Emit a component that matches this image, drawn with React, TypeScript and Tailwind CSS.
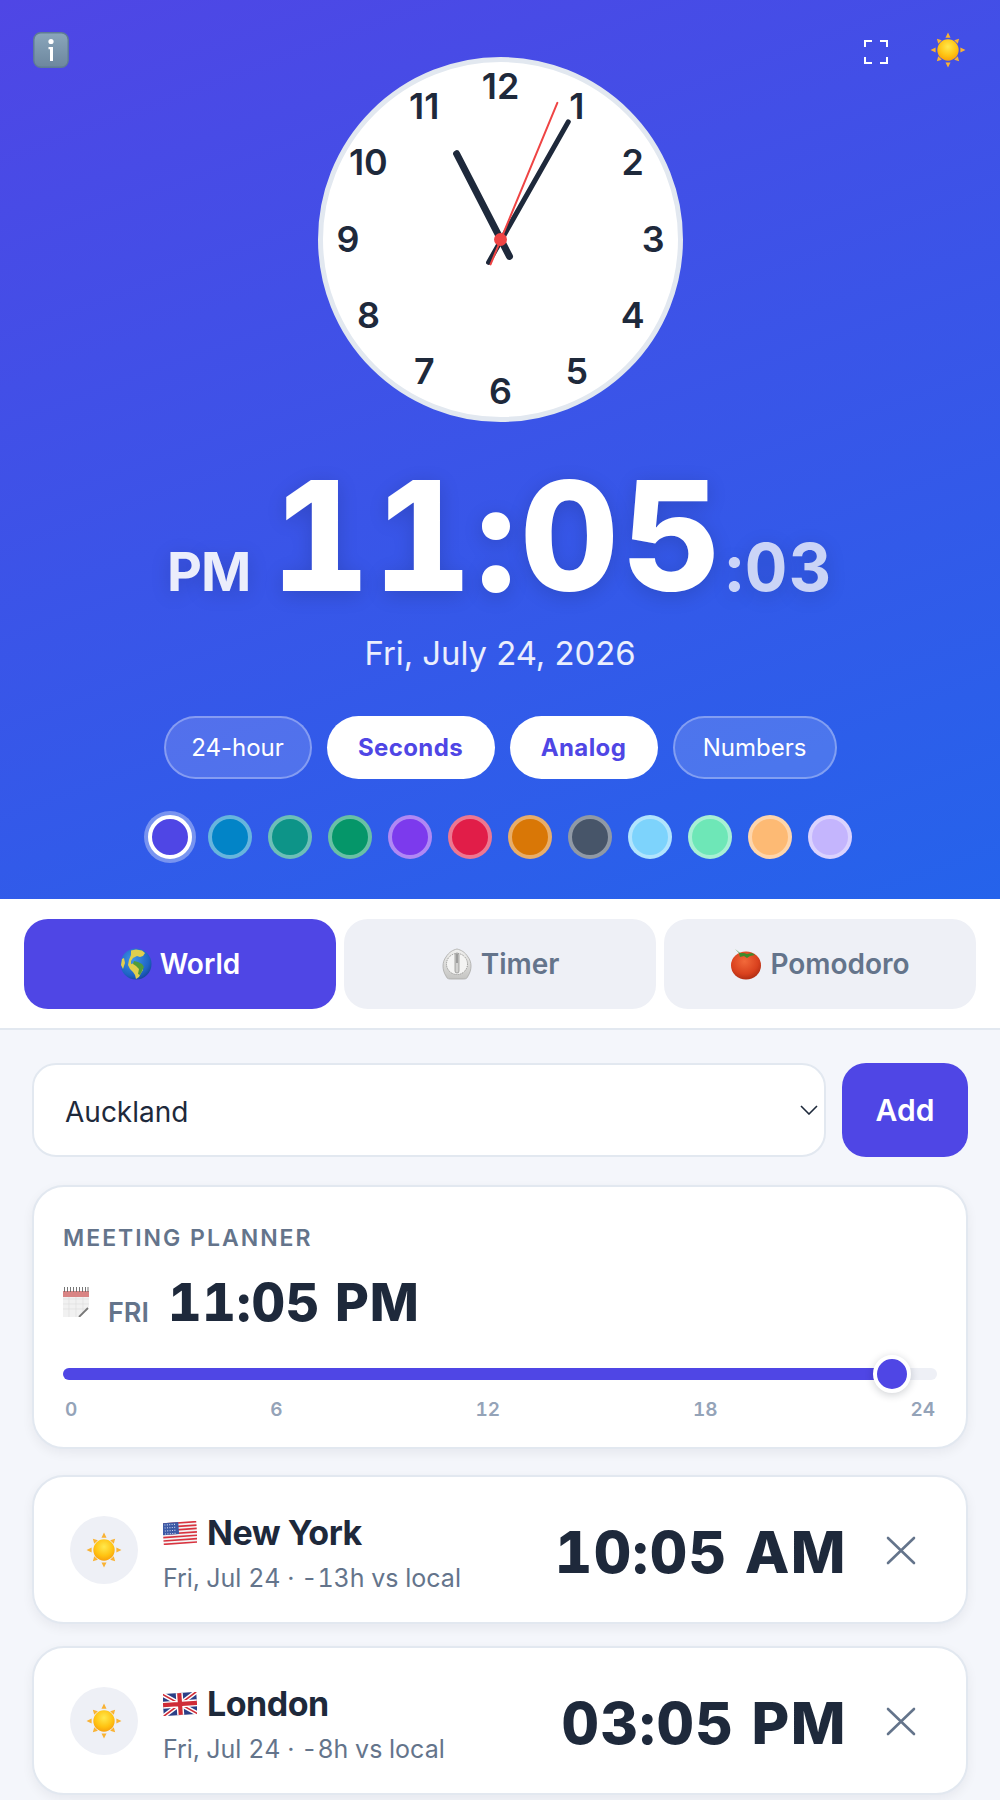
import React from "react";

function Sun({ className }: { className: string }) {
  const rays = [0, 45, 90, 135, 180, 225, 270, 315];
  return (
    <svg viewBox="0 0 64 64" className={className}>
      <defs>
        <radialGradient id="sunG" cx="50%" cy="35%" r="70%">
          <stop offset="0%" stopColor="#ffe94d" />
          <stop offset="60%" stopColor="#ffc312" />
          <stop offset="100%" stopColor="#f79a0c" />
        </radialGradient>
      </defs>
      {rays.map((r) => (
        <polygon key={r} points={r % 90 === 0 ? "32,1 36.5,10 27.5,10" : "32,4 36.5,12 27.5,12"} fill="#f9b233" transform={`rotate(${r} 32 32)`} />
      ))}
      <circle cx="32" cy="32" r="19" fill="url(#sunG)" />
    </svg>
  );
}

function InfoEmoji() {
  return (
    <svg viewBox="0 0 36 36" className="w-[36px] h-[36px]">
      <defs>
        <linearGradient id="infoG" x1="0" y1="0" x2="0" y2="1">
          <stop offset="0%" stopColor="#8aa6bb" />
          <stop offset="100%" stopColor="#6d879e" />
        </linearGradient>
      </defs>
      <rect x="0.8" y="0.8" width="34.4" height="34.4" rx="7" fill="url(#infoG)" stroke="#5f7c94" strokeWidth="1.4" />
      <circle cx="18" cy="9.5" r="2.6" fill="#fff" />
      <path d="M15.5 15h4.5v14h-3V17.2h-1.5z" fill="#fff" />
    </svg>
  );
}

function Globe() {
  return (
    <svg viewBox="0 0 32 32" className="w-[32px] h-[32px]">
      <defs>
        <radialGradient id="globeG" cx="40%" cy="35%" r="75%">
          <stop offset="0%" stopColor="#3f95e8" />
          <stop offset="70%" stopColor="#1e63c4" />
          <stop offset="100%" stopColor="#123d8c" />
        </radialGradient>
      </defs>
      <circle cx="16" cy="16" r="15.5" fill="url(#globeG)" />
      <path d="M11 2.5l5-1 6 1 3 2.5-2 3-3 1-3-1-4 2-2 3 0 3 4-1 4 1 3 2 1 4-2 3-2 4-3 2-1-4-2-3-3-3-2-4 1-5 2-5z" fill="#e0cf4e" />
      <path d="M14 13l4 1 4 2 2 3-2 4-2 4-2-1 1-5-3-3-3-2z" fill="#4f9c3b" />
      <path d="M2 11l2-1 1 5-2 6-2-4z" fill="#e3cf4f" />
    </svg>
  );
}

function TimerEmoji() {
  return (
    <svg viewBox="0 0 32 32" className="w-[32px] h-[32px]">
      <defs>
        <linearGradient id="timerG" x1="0" y1="0" x2="0" y2="1">
          <stop offset="0%" stopColor="#f1f1f0" />
          <stop offset="100%" stopColor="#c5c5c3" />
        </linearGradient>
      </defs>
      <path d="M5 28 C1 22 1 14 5 9 C8 4 12 2 16 1 C20 2 24 4 27 9 C31 14 31 22 27 28 C26 31 24 31 22 31 H10 C8 31 6 31 5 28z" fill="url(#timerG)" stroke="#a9a9a7" strokeWidth="0.8" />
      <circle cx="16" cy="16" r="10.5" fill="#f4f4f3" stroke="#8f8f8d" strokeWidth="1" strokeDasharray="1 1" />
      <rect x="14" y="5" width="4" height="20" rx="2" fill="#d2d2d0" stroke="#8a8a88" strokeWidth="0.7" />
      <path d="M16 6v9" stroke="#666" strokeWidth="1" />
    </svg>
  );
}

function Tomato() {
  return (
    <svg viewBox="0 0 32 32" className="w-[32px] h-[32px]">
      <defs>
        <radialGradient id="tomG" cx="45%" cy="35%" r="70%">
          <stop offset="0%" stopColor="#f2693a" />
          <stop offset="65%" stopColor="#d9411e" />
          <stop offset="100%" stopColor="#a82a12" />
        </radialGradient>
      </defs>
      <ellipse cx="16" cy="17.5" rx="15" ry="14" fill="url(#tomG)" />
      <path d="M5 1l5 4 4 0 3 1 5-1 3 2-5 1-3 2-3-2-4 1-1-4z" fill="#3f8a2a" />
    </svg>
  );
}

function CalendarEmoji() {
  return (
    <svg viewBox="0 0 26 30" className="w-[26px] h-[30px]">
      <rect x="0" y="4" width="26" height="26" fill="#f1f1f1" />
      <path d="M0 12h26M0 17h26M0 22h26M6 8v22M13 8v22M20 8v22" stroke="#dcdcdc" strokeWidth="0.6" />
      <rect x="0" y="4" width="26" height="6" fill="#d98484" />
      <path d="M1.5 0v5M4.5 0v5M7.5 0v5M10.5 0v5M13.5 0v5M16.5 0v5M19.5 0v5M22.5 0v5M25 0v5" stroke="#666" strokeWidth="0.9" />
      <path d="M26 20 L17 30 H26z" fill="#fff" />
      <path d="M16 30 L25 21" stroke="#777" strokeWidth="1.8" />
    </svg>
  );
}

function FlagUS() {
  return (
    <svg viewBox="0 0 34 24" className="w-[34px] h-[24px]">
      <g transform="rotate(-4 17 12)">
        <rect y="1" width="34" height="22" rx="1.5" fill="#f4f4f4" />
        {[0, 2, 4, 6, 8, 10].map((i) => (
          <rect key={i} y={1 + i * 1.7} width="34" height="1.7" fill="#d8333f" />
        ))}
        <rect y="21.4" width="34" height="1.6" fill="#d8333f" />
        <rect y="1" width="16" height="12" fill="#3c5aa6" />
        <path d="M2 3h12M2 6h12M2 9h12M2 12h12" stroke="#cfd6ee" strokeWidth="1.1" strokeDasharray="1 1.4" />
      </g>
    </svg>
  );
}

function FlagUK() {
  return (
    <svg viewBox="0 0 34 24" className="w-[34px] h-[24px]">
      <g transform="rotate(-4 17 12)">
        <rect y="1" width="34" height="22" rx="1.5" fill="#2b3f87" />
        <path d="M0 1L34 23M34 1L0 23" stroke="#fff" strokeWidth="4.5" />
        <path d="M0 1L34 23M34 1L0 23" stroke="#cf2b36" strokeWidth="1.6" />
        <path d="M17 1v22M0 12h34" stroke="#fff" strokeWidth="7" />
        <path d="M17 1v22M0 12h34" stroke="#cf2b36" strokeWidth="4.2" />
      </g>
    </svg>
  );
}

function Fullscreen() {
  return (
    <svg viewBox="0 0 24 24" className="w-[24px] h-[24px]" fill="none" stroke="#fff" strokeWidth="2">
      <path d="M1 7V1h7M16 1h7v6M23 17v6h-7M8 23H1v-6" />
    </svg>
  );
}

function Clock() {
  const nums = [12, 1, 2, 3, 4, 5, 6, 7, 8, 9, 10, 11];
  return (
    <div className="w-[365px] h-[365px] shrink-0 rounded-full bg-white border-[5px] border-[#e2e8f0] box-border">
      <svg viewBox="-178 -178 356 356" className="w-[355px] h-[355px] block">
        {nums.map((n, i) => {
          const a = (i * 30 * Math.PI) / 180;
          return (
            <text key={n} x={153 * Math.sin(a)} y={-153 * Math.cos(a) - 1} textAnchor="middle" dominantBaseline="central" fontSize="36" fontWeight="600" fill="#1e293b" fontFamily="Inter">
              {n}
            </text>
          );
        })}
        <line x1="9" y1="17" x2="-44" y2="-86" stroke="#1e293b" strokeWidth="7" strokeLinecap="round" />
        <line x1="-12" y1="23" x2="68" y2="-118" stroke="#1e293b" strokeWidth="5" strokeLinecap="round" />
        <line x1="-10" y1="25" x2="57" y2="-137" stroke="#ef4444" strokeWidth="2" strokeLinecap="round" />
        <circle r="6.5" fill="#ef4444" />
      </svg>
    </div>
  );
}

const swatches = [
  { c: "bg-[#4f46e5]", b: "border-white" },
  { c: "bg-[#0284c7]", b: "border-white/40" },
  { c: "bg-[#0d9488]", b: "border-white/40" },
  { c: "bg-[#059669]", b: "border-white/40" },
  { c: "bg-[#7c3aed]", b: "border-white/40" },
  { c: "bg-[#e11d48]", b: "border-white/40" },
  { c: "bg-[#d97706]", b: "border-white/40" },
  { c: "bg-[#475569]", b: "border-white/40" },
  { c: "bg-[#7dd3fc]", b: "border-white/40" },
  { c: "bg-[#6ee7b7]", b: "border-white/40" },
  { c: "bg-[#fdba74]", b: "border-white/40" },
  { c: "bg-[#c4b5fd]", b: "border-white/40" },
];

function Pill({ label, on, w }: { label: string; on?: boolean; w: string }) {
  return (
    <div className={`${w} h-[63px] rounded-full flex items-center justify-center text-[24px] ${on ? "bg-white text-[#4f46e5] font-bold tracking-[0.4px]" : "bg-white/15 border-2 border-white/30 text-white font-normal"}`}>
      {label}
    </div>
  );
}

function Tab({ icon, label, on }: { icon: React.ReactNode; label: string; on?: boolean }) {
  return (
    <div className={`flex-1 h-[90px] rounded-[24px] flex items-center justify-center gap-[8px] text-[28px] font-semibold ${on ? "bg-[#4f46e5] text-white" : "bg-[#eef0f6] text-[#64748b]"}`}>
      {icon}
      <span>{label}</span>
    </div>
  );
}

function CityCard({ flag, name, sub, time }: { flag: React.ReactNode; name: string; sub: string; time: string }) {
  return (
    <div className="h-[149px] rounded-[32px] bg-white border-2 border-[#e2e8f0] shadow-[0_4px_12px_rgba(15,23,42,0.06)] flex items-center pl-[36px] pr-[50px]">
      <div className="w-[68px] h-[68px] rounded-full bg-[#eef0f6] flex items-center justify-center shrink-0">
        <Sun className="w-[36px] h-[36px]" />
      </div>
      <div className="ml-[25px] flex-1">
        <div className="flex items-center gap-[10px] text-[34px] leading-[44px] font-bold text-[#1e293b] tracking-[-0.5px] mt-[6px]">
          {flag}
          <span>{name}</span>
        </div>
        <div className="mt-[6px] text-[25px] leading-[34px] text-[#64748b] tabular-nums [font-feature-settings:'tnum'_1,'calt'_0]">{sub}</div>
      </div>
      <div className="mt-[4px] text-[58px] font-extrabold text-[#1e293b] tabular-nums leading-none tracking-[1.5px] [font-feature-settings:'tnum'_1,'calt'_0]">{time}</div>
      <svg viewBox="0 0 30 30" className="w-[30px] h-[30px] ml-[39px] shrink-0" fill="none" stroke="#64748b" strokeWidth="2.6" strokeLinecap="round">
        <path d="M2 3l26 25M28 3L2 28" />
      </svg>
    </div>
  );
}

export default function App() {
  return (
    <div className="w-[1000px] h-[1800px] overflow-hidden bg-[#f4f6fb] font-['Inter',sans-serif] [font-optical-sizing:none] [font-variation-settings:'opsz'_14]">
      <div className="relative h-[899px] bg-[linear-gradient(160deg,#4f46e5,#2563eb)] flex flex-col items-center pt-[57px] text-white">
        <div className="absolute left-[33px] top-[32px]"><InfoEmoji /></div>
        <div className="absolute left-[864px] top-[40px]"><Fullscreen /></div>
        <div className="absolute left-[930px] top-[32px]"><Sun className="w-[36px] h-[36px]" /></div>
        <Clock />
        <div className="mt-[38px] flex items-baseline h-[152px] leading-none [text-shadow:0_4px_20px_rgba(0,0,0,0.15)] [font-feature-settings:'tnum'_1,'calt'_0]">
          <span className="text-[54px] font-bold text-white/90 mr-[21px] tracking-[-1px]">PM</span>
          <span className="text-[152px] leading-[152px] font-extrabold tabular-nums tracking-[4px]">11:05</span>
          <span className="text-[66px] font-bold text-white/75 tabular-nums ml-[1px] tracking-[1.5px]">:03</span>
        </div>
        <div className="mt-[19px] text-[32.8px] leading-[44px] text-white/90">Fri, July 24, 2026</div>
        <div className="mt-[41px] flex gap-[15px]">
          <Pill label="24-hour" w="w-[148px]" />
          <Pill label="Seconds" on w="w-[168px]" />
          <Pill label="Analog" on w="w-[148px]" />
          <Pill label="Numbers" w="w-[164px]" />
        </div>
        <div className="mt-[36px] flex gap-[16px] items-center">
          {swatches.map((s, i) => (
            <div key={i} className={`w-[44px] h-[44px] rounded-full border-[4px] ${s.b} ${s.c} ${i === 0 ? "shadow-[0_0_0_4px_rgba(255,255,255,0.35)]" : ""}`} />
          ))}
        </div>
      </div>

      <div className="h-[131px] bg-white border-b-2 border-[#e2e8f0] px-[24px] pt-[20px] flex gap-[8px] items-start">
        <Tab icon={<Globe />} label="World" on />
        <Tab icon={<TimerEmoji />} label="Timer" />
        <Tab icon={<Tomato />} label="Pomodoro" />
      </div>

      <div className="px-[32px] pt-[33px]">
        <div className="flex gap-[16px] h-[94px]">
          <div className="relative flex-1 min-w-0">
            <select className="appearance-none w-full h-[94px] rounded-[24px] bg-white border-2 border-[#e2e8f0] pl-[31px] pr-[30px] pt-[3px] text-[28px] text-[#1e293b]" defaultValue="Auckland">
              <option>Auckland</option>
            </select>
            <svg viewBox="0 0 18 10" className="absolute right-[8px] top-[42px] w-[18px] h-[10px]" fill="none" stroke="#1e293b" strokeWidth="1.6">
              <path d="M1 1l8 8 8-8" />
            </svg>
          </div>
          <div className="w-[126px] rounded-[24px] bg-[#4f46e5] text-white text-[30px] font-semibold flex items-center justify-center">Add</div>
        </div>

        <div className="mt-[28px] h-[264px] rounded-[32px] bg-white border-2 border-[#e2e8f0] shadow-[0_4px_12px_rgba(15,23,42,0.06)] px-[29px] pt-[37px]">
          <div className="text-[23px] leading-[28px] font-semibold tracking-[2px] text-[#64748b]">MEETING PLANNER</div>
          <div className="mt-[21px] flex items-end h-[60px]">
            <div className="mb-[16px]"><CalendarEmoji /></div>
            <span className="ml-[19px] text-[27px] leading-[30px] font-semibold text-[#64748b] mb-[5px]">FRI</span>
            <span className="ml-[19px] text-[52px] leading-[60px] font-extrabold text-[#1e293b] tabular-nums tracking-[0.8px] [font-feature-settings:'tnum'_1,'calt'_0]">11:05 PM</span>
          </div>
          <div className="relative mt-[35px] h-[12px] rounded-full bg-[#eef0f6]">
            <div className="h-[12px] w-[829px] rounded-full bg-[#4f46e5]" />
            <div className="absolute left-[810px] top-[-13px] w-[38px] h-[38px] rounded-full bg-[#4f46e5] border-[4px] border-white shadow-[0_2px_8px_rgba(15,23,42,0.2)]" />
          </div>
          <div className="mt-[18px] px-[2px] flex justify-between text-[19px] leading-[24px] font-semibold text-[#94a3b8] tabular-nums [font-feature-settings:'tnum'_1]">
            <span>0</span><span>6</span><span>12</span><span>18</span><span>24</span>
          </div>
        </div>

        <div className="mt-[26px] flex flex-col gap-[22px]">
          <CityCard flag={<FlagUS />} name="New York" sub="Fri, Jul 24 · -13h vs local" time="10:05 AM" />
          <CityCard flag={<FlagUK />} name="London" sub="Fri, Jul 24 · -8h vs local" time="03:05 PM" />
        </div>
      </div>
    </div>
  );
}
